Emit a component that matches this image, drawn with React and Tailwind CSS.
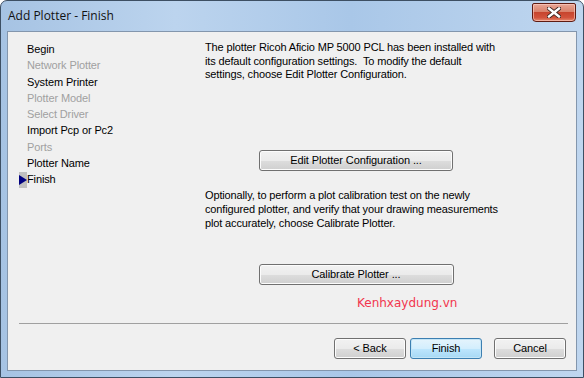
import React from "react";

function WinButton({ children, w = "w-[72px]", primary = false }) {
  return (
    <div
      className={
        "relative flex h-[21px] items-center justify-center rounded-[3px] border text-[11px] tracking-[-0.1px] text-black " +
        w +
        (primary
          ? " border-[#3c7fb1] bg-[linear-gradient(#e5f4fc_0%,#d3eefd_50%,#bee6fd_51%,#a7d9f5_100%)] shadow-[inset_0_0_0_1px_#c4e5f6]"
          : " border-[#707070] bg-[linear-gradient(#f2f2f2_0%,#ebebeb_50%,#dddddd_51%,#cfcfcf_100%)] shadow-[inset_0_0_0_1px_#fcfcfc]")
      }
    >
      <span className="leading-none">{children}</span>
    </div>
  );
}

export default function App() {
  const steps = [
    ["Begin", true],
    ["Network Plotter", false],
    ["System Printer", true],
    ["Plotter Model", false],
    ["Select Driver", false],
    ["Import Pcp or Pc2", true],
    ["Ports", false],
    ["Plotter Name", true],
    ["Finish", true, true],
  ];

  return (
    <div
      className="flex h-[378px] w-[584px] flex-col overflow-hidden rounded-t-[7px] border border-[#3d4f63] bg-[linear-gradient(90deg,#a6c3e3_0%,#bcd4ee_30%,#a9c7e8_60%,#bfd6ef_100%)] px-[6px] pb-[6px]"
      style={{ fontFamily: '"Liberation Sans", Arial, sans-serif' }}
    >
      {/* title bar */}
      <div className="flex h-[30px] shrink-0 items-start">
        <div
          className="pl-[1px] pt-[7px] text-[12px] leading-[16px] text-[#111]"
          style={{ fontFamily: '"Open Sans", "Noto Sans", sans-serif' }}
        >
          Add Plotter - Finish
        </div>
        <div className="ml-auto mt-[2px] mr-[1px] flex h-[19px] w-[44px] items-center justify-center rounded-b-[4px] rounded-t-[2px] border border-[#5e1b12] bg-[linear-gradient(#e8a696_0%,#d9826c_45%,#c7452e_50%,#d2533c_80%,#e58a6f_100%)] shadow-[inset_0_0_0_1px_rgba(255,210,200,0.6)]">
          <svg width="14" height="11" viewBox="0 0 14 11">
            <path
              d="M2 1.5 L12 9.5 M12 1.5 L2 9.5"
              stroke="#3a2420"
              strokeWidth="4.2"
              strokeLinecap="square"
            />
            <path
              d="M2 1.5 L12 9.5 M12 1.5 L2 9.5"
              stroke="#ffffff"
              strokeWidth="2.4"
              strokeLinecap="square"
            />
          </svg>
        </div>
      </div>

      {/* client area */}
      <div className="flex flex-1 flex-col border border-[#8396ad] bg-[#f0f0f0]">
        <div className="flex flex-1 pl-[11px] pt-[9px]">
          {/* step list */}
          <div className="flex w-[186px] shrink-0 flex-col text-[11px] leading-[16.3px] tracking-[-0.12px]">
            {steps.map(([label, enabled, current]) => (
              <div key={label} className="flex items-center">
                <div className="flex h-[16px] w-[8px] items-center justify-center">
                  {current && (
                    <div className="flex h-[16px] w-[8px] items-center bg-[#c0c0c0]">
                      <svg width="8" height="10" viewBox="0 0 8 10">
                        <path d="M0 0 L8 5 L0 10 Z" fill="#000080" />
                      </svg>
                    </div>
                  )}
                </div>
                <span className={enabled ? "text-black" : "text-[#a0a0a0]"}>
                  {label}
                </span>
              </div>
            ))}
          </div>

          {/* right content */}
          <div className="flex w-[302px] flex-col text-[11px] tracking-[-0.14px] text-black">
            <p className="leading-[13.6px]">
              The plotter Ricoh Aficio MP 5000 PCL has been installed with
              <br />
              its default configuration settings.&nbsp; To modify the default
              <br />
              settings, choose Edit Plotter Configuration.
            </p>
            <div className="mt-[68px] flex justify-center">
              <WinButton w="w-[194px]">Edit Plotter Configuration ...</WinButton>
            </div>
            <p className="mt-[17px] leading-[14px]">
              Optionally, to perform a plot calibration test on the newly
              <br />
              configured plotter, and verify that your drawing measurements
              <br />
              plot accurately, choose Calibrate Plotter.
            </p>
            <div className="mt-[34px] flex justify-center">
              <WinButton w="w-[195px]">Calibrate Plotter ...</WinButton>
            </div>
            <div
              className="mt-[11px] pl-[152px] text-[12px] leading-[14px] tracking-normal text-[#f2354e]"
              style={{ fontFamily: '"DejaVu Sans", Verdana, sans-serif' }}
            >
              Kenhxaydung.vn
            </div>
          </div>
        </div>

        {/* separator */}
        <div className="ml-[11px] mr-[8px] h-px bg-[#a0a0a0]" />

        {/* bottom buttons */}
        <div className="flex h-[46px] shrink-0 items-start justify-end pr-[10px] pt-[14px]">
          <WinButton>&lt; Back</WinButton>
          <div className="ml-[4px]">
            <WinButton primary>Finish</WinButton>
          </div>
          <div className="ml-[12px]">
            <WinButton>Cancel</WinButton>
          </div>
        </div>
      </div>
    </div>
  );
}
